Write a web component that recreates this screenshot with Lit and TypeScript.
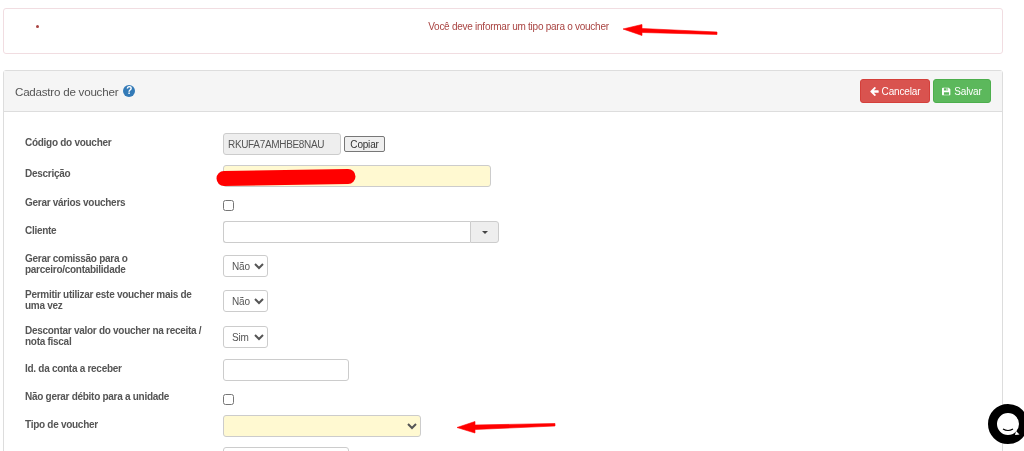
import { LitElement, html, css, svg } from "lit";
import { customElement } from "lit/decorators.js";

@customElement("app-root")
export class AppRoot extends LitElement {
  static styles = css`
    :host {
      display: block;
      position: relative;
      width: 1024px;
      height: 451px;
      overflow: hidden;
      background: #fff;
      font-family: "Liberation Sans", Arial, sans-serif;
      color: #555;
    }
    .page {
      display: flex;
      flex-direction: column;
      gap: 16px;
      width: 1000px;
      padding: 8px 0 0 3px;
      filter: blur(0.4px);
    }
    .alert {
      height: 46px;
      box-sizing: border-box;
      border: 1px solid #f1dde1;
      border-radius: 3px;
      color: #a94442;
      font-size: 10px;
      letter-spacing: -0.26px;
      line-height: 12px;
      padding: 12px 14px 0 45px;
      text-align: center;
    }
    .alert ul { margin: 0; padding: 0; }
    .panel {
      border: 1px solid #ddd;
      border-radius: 3px;
      height: 420px;
    }
    .heading {
      height: 41px;
      box-sizing: border-box;
      background: #f5f5f5;
      border-bottom: 1px solid #ddd;
      display: flex;
      align-items: center;
      justify-content: space-between;
      padding: 0 11px;
    }
    .title {
      display: flex;
      align-items: center;
      gap: 5px;
      font-size: 11.6px;
      letter-spacing: -0.23px;
      color: #555;
    }
    .help {
      width: 12px;
      height: 12px;
      border-radius: 50%;
      background: #337ab7;
      color: #fff;
      font-size: 10px;
      font-weight: bold;
      line-height: 12px;
      text-align: center;
    }
    .actions { display: flex; gap: 3px; }
    .btn {
      height: 24px;
      box-sizing: border-box;
      border-radius: 3px;
      color: #fff;
      font-size: 10px;
      letter-spacing: -0.15px;
      display: flex;
      align-items: center;
      justify-content: center;
      gap: 3px;
    }
    .btn svg { width: 9px; height: 9px; fill: #fff; }
    .cancel { width: 70px; background: #d9534f; border: 1px solid #d43f3a; }
    .save { width: 58px; background: #5cb85c; border: 1px solid #4cae4c; }
    .form {
      display: grid;
      grid-template-columns: 198px 1fr;
      grid-template-rows: 22px 22px 14px 22px 24px 25px 26px 23px 14px 22px 22px;
      row-gap: 10px;
      padding: 21px 21px 0 21px;
      align-items: end;
    }
    .label {
      align-self: start;
      font-size: 10px;
      letter-spacing: -0.28px;
      font-weight: bold;
      line-height: 11px;
      color: #555;
      width: 180px;
    }
    .control { display: flex; align-items: center; gap: 3px; }
    .field {
      height: 22px;
      box-sizing: border-box;
      border: 1px solid #ccc;
      border-radius: 3px;
      background: #fff;
      font: 10px "Liberation Sans", Arial, sans-serif;
      letter-spacing: -0.2px;
      color: #555;
      padding: 0 4px;
      outline: none;
      margin: 0;
      display: block;
    }
    .code { width: 118px; background: #eee; letter-spacing: -0.33px; }
    .copy {
      height: 16px;
      width: 41px;
      padding: 0;
      box-sizing: border-box;
      border: 1px solid #777;
      border-radius: 2px;
      background: #efefef;
      font: 10px "Liberation Sans", Arial, sans-serif;
      letter-spacing: -0.2px;
      color: #333;
    }
    .wide { width: 268px; }
    .yellow { background: #fff9d1; }
    .short { width: 126px; }
    .sim { width: 45px; padding: 0 0 0 4px; }
    .tipo { width: 198px; padding: 0; }
    .box {
      width: 11px;
      height: 11px;
      margin: 0;
      display: block;
    }
    .combo { display: flex; width: 276px; }
    .combo .field { flex: 1; border-radius: 3px 0 0 3px; border-right: 0; }
    .caret {
      width: 29px;
      height: 22px;
      box-sizing: border-box;
      border: 1px solid #ccc;
      border-radius: 0 3px 3px 0;
      background: #eee;
      display: flex;
      align-items: center;
      justify-content: center;
    }
    .caret i {
      width: 0;
      height: 0;
      border-left: 3px solid transparent;
      border-right: 3px solid transparent;
      border-top: 3px solid #444;
    }
    .marks { position: absolute; inset: 0; pointer-events: none; }
    .chat { position: absolute; left: 988px; top: 404px; width: 40px; height: 40px; }
  `;

  private row(label: string, top: number, control: unknown) {
    return html`<div class="label" style="padding-top:${top}px">${label}</div><div class="control">${control}</div>`;
  }

  private sel(v: string) {
    return html`<select class="field sim"><option>${v}</option></select>`;
  }

  render() {
    return html`
      <div class="page">
        <div class="alert"><ul><li>Você deve informar um tipo para o voucher</li></ul></div>
        <div class="panel">
          <div class="heading">
            <div class="title">Cadastro de voucher <span class="help">?</span></div>
            <div class="actions">
              <div class="btn cancel">
                <svg viewBox="0 0 14 14"><path d="M13.5 6v2a1 1 0 0 1-1 1H6l2.700 2.700a1 1 0 0 1 0 1.400l-.6.6a1 1 0 0 1-1.400 0L.8 7.700a1 1 0 0 1 0-1.400L6.700.3a1 1 0 0 1 1.400 0l.6.6a1 1 0 0 1 0 1.400L6 5h6.500a1 1 0 0 1 1 1z"/></svg>
                Cancelar
              </div>
              <div class="btn save">
                <svg viewBox="0 0 14 14"><path fill-rule="evenodd" d="M1.500 1h9L13 3.500V11.500A1.500 1.500 0 0 1 11.500 13h-10A1.500 1.500 0 0 1 0 11.500v-9A1.500 1.500 0 0 1 1.500 1zM3 2v3.500h6.500V2zM7 2.500h1.500v2.500H7zM3 8v4h8V8z"/></svg>
                Salvar
              </div>
            </div>
          </div>
          <div class="form">
            ${this.row("Código do voucher", 4, html`<input class="field code" .value=${"RKUFA7AMHBE8NAU"} readonly /><button class="copy">Copiar</button>`)}
            ${this.row("Descrição", 3, html`<input class="field wide yellow" />`)}
            ${this.row("Gerar vários vouchers", 0, html`<input type="checkbox" class="box" />`)}
            ${this.row("Cliente", 4, html`<div class="combo"><input class="field" /><div class="caret"><i></i></div></div>`)}
            ${this.row("Gerar comissão para o parceiro/contabilidade", 0, this.sel("Não"))}
            ${this.row("Permitir utilizar este voucher mais de uma vez", 2, this.sel("Não"))}
            ${this.row("Descontar valor do voucher na receita / nota fiscal", 3, this.sel("Sim"))}
            ${this.row("Id. da conta a receber", 5, html`<input class="field short" />`)}
            ${this.row("Não gerar débito para a unidade", 0, html`<input type="checkbox" class="box" />`)}
            ${this.row("Tipo de voucher", 4, html`<select class="field tipo yellow"><option></option></select>`)}
            ${this.row("", 0, html`<input class="field short" />`)}
          </div>
        </div>
      </div>
      <svg class="marks" viewBox="0 0 1024 451" width="1024" height="451">
        ${svg`
          <path d="M224 178.500L348 176.500" stroke="#f00" stroke-width="15" stroke-linecap="round" fill="none"/>
          <path d="M623 29L642 24.500L642 28.500L717 32L717 34.500L642 32.500L642 35.500Z" fill="#f00" stroke="#f00" stroke-linejoin="round" stroke-width=".6"/>
          <path d="M457 427.500L475 421.500L475 425L555 423.500L555 426L475 429.500L475 433Z" fill="#f00" stroke="#f00" stroke-linejoin="round" stroke-width=".6"/>
        `}
      </svg>
      <svg class="chat" viewBox="0 0 40 40">
        <circle cx="20" cy="20" r="15.500" fill="#fff" stroke="#000" stroke-width="9"/>
        <path d="M28 27L31.500 30.500L27 31Z" fill="#fff"/>
        <path d="M15 25q5 3 10 0" stroke="#000" stroke-width="1.200" fill="none"/>
      </svg>
    `;
  }
}
